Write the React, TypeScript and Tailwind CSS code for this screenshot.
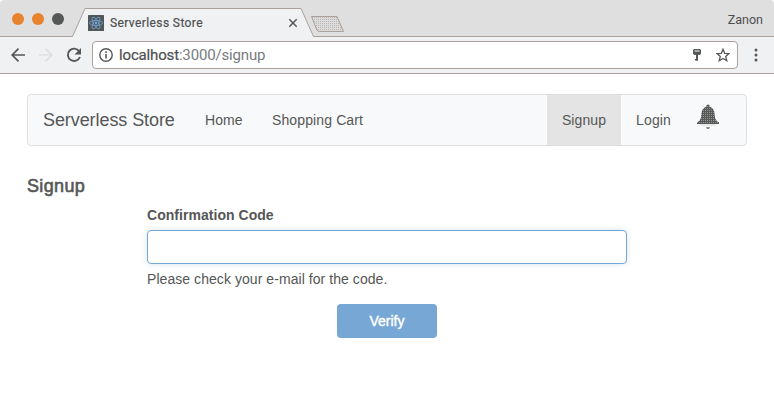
import React from "react";

function BrowserTab() {
  return (
    <div className="relative -ml-px h-[37px] w-[244px] shrink-0">
      <svg className="absolute inset-0" width="244" height="37" viewBox="0 0 244 37">
        <path d="M0 37V36.5H1.5L14 8.5H230L242.500 36.500H244V37Z" fill="#f0f1f3" />
        <path d="M0 36.5H1.500L14 8.500H230L242.500 36.500H244" fill="none" stroke="#aaa19c" />
      </svg>
      <div className="relative flex h-full items-center pt-[8px] pl-[17px]">
        <ReactMark />
        <span className="ml-[6px] w-[93px] font-['Roboto',sans-serif] text-[12px] leading-[16px] tracking-[0.4px] whitespace-nowrap text-[#4d4f50] [-webkit-text-stroke:0.2px_#4d4f50]">
          Serverless Store
        </span>
        <svg className="ml-[85px]" width="10" height="10" viewBox="0 0 10 10">
          <path d="M1.300 1.300 8.700 8.700M8.700 1.300 1.300 8.700" stroke="#555756" strokeWidth="1.500" />
        </svg>
      </div>
    </div>
  );
}

function ReactMark() {
  return (
    <svg width="16" height="16" viewBox="0 0 16 16">
      <rect width="16" height="16" rx="0.500" fill="#53585a" />
      <g fill="none" stroke="#6fa3d2" strokeWidth="0.8">
        <ellipse cx="8" cy="8" rx="6.500" ry="2.500" />
        <ellipse cx="8" cy="8" rx="6.500" ry="2.500" transform="rotate(60 8 8)" />
        <ellipse cx="8" cy="8" rx="6.500" ry="2.500" transform="rotate(120 8 8)" />
      </g>
      <circle cx="8" cy="8" r="1.300" fill="#6fa3d2" />
    </svg>
  );
}

function TabStrip() {
  return (
    <div className="flex h-[37px] rounded-t-[4px] border-b border-[#aaa19c] bg-[#dfdfdf]">
      <div className="flex h-[38px] w-[72px] shrink-0 items-center gap-2 pl-[12px]">
        <span className="size-[12px] rounded-full bg-[#e9822d]" />
        <span className="size-[12px] rounded-full bg-[#e9822d]" />
        <span className="size-[12px] rounded-full bg-[#555857]" />
      </div>
      <BrowserTab />
      <svg className="mt-[15px] -ml-[5px]" width="35" height="18" viewBox="0 0 35 18">
        <defs>
          <pattern id="dots" width="2" height="2" patternUnits="userSpaceOnUse">
            <rect width="2" height="2" fill="#dcdcdc" />
            <rect width="1" height="1" fill="#bbb5b1" />
          </pattern>
        </defs>
        <path d="M1.500 1.500H27L33.500 16.500H9.500Q7.500 16.500 6.500 14Z" fill="url(#dots)" stroke="#aaa19c" />
      </svg>
      <span className="mt-[11px] mr-[11px] ml-auto font-['Roboto',sans-serif] text-[12.500px] leading-[18px] tracking-[0px] text-[#4d4f50]">
        Zanon
      </span>
    </div>
  );
}

function Toolbar() {
  return (
    <div className="flex h-[37px] items-center border-b border-[#aaa19c] bg-[#f0f1f3]">
      <svg className="ml-[10px]" width="16" height="16" viewBox="0 0 16 16" fill="none" stroke="#555857" strokeWidth="1.700">
        <path d="M15 8H2.500M8.500 1.700 2.200 8l6.300 6.300" />
      </svg>
      <svg className="ml-[12px]" width="16" height="16" viewBox="0 0 16 16" fill="none" stroke="#dfdfdf" strokeWidth="1.700">
        <path d="M1 8h12.500M7.500 1.700 13.800 8l-6.300 6.300" />
      </svg>
      <svg className="ml-[12px]" width="16" height="16" viewBox="0 0 16 16" fill="none">
        <path d="M13.200 4.300A6.200 6.200 0 1 0 13.900 10" stroke="#555857" strokeWidth="1.900" />
        <path d="M15 1v6.500H8.500Z" fill="#555857" />
      </svg>
      <div className="ml-[10px] flex h-[28px] w-[646px] items-center rounded-[4px] border border-[#aaa19c] bg-white">
        <svg className="ml-[6px]" width="14" height="14" viewBox="0 0 14 14" fill="none">
          <circle cx="7" cy="7" r="6.200" stroke="#555857" strokeWidth="1.400" />
          <path d="M7 6v4.500M7 3.300v1.600" stroke="#555857" strokeWidth="1.600" />
        </svg>
        <span className="ml-[6px] font-['Roboto',sans-serif] text-[15px] leading-[20px] tracking-[-0.16px] text-[#777b7e]">
          <span className="text-[#4d4f50] [-webkit-text-stroke:0.2px_#4d4f50]">localhost</span>:3000/signup
        </span>
        <svg className="mr-[14px] ml-auto" width="10" height="14" viewBox="0 0 10 14" fill="#555857">
          <path fillRule="evenodd" d="M2 1h6l1 1v4L7.500 7H6v5.500H4V7H2.500L1 6V2ZM2.500 2.500v1h5v-1Z" />
          <path d="M3 11H6v1.500H3Z" />
        </svg>
        <svg className="mr-[7px]" width="14" height="14" viewBox="0 0 14 14" fill="none" stroke="#555857" strokeWidth="1.300">
          <path d="m7 1.300 1.700 4 4.300.3-3.300 2.800 1.100 4.300L7 10.400l-3.800 2.300 1.100-4.300L1 5.600l4.300-.3Z" />
        </svg>
      </div>
      <svg className="ml-[16px]" width="4" height="14" viewBox="0 0 4 14" fill="#555857">
        <circle cx="2" cy="2" r="1.500" />
        <circle cx="2" cy="7" r="1.500" />
        <circle cx="2" cy="12" r="1.500" />
      </svg>
    </div>
  );
}

function Bell() {
  return (
    <svg width="22" height="26" viewBox="0 0 22 26">
      <defs>
        <pattern id="bellDots" width="2" height="2" patternUnits="userSpaceOnUse">
          <rect width="2" height="2" fill="#555857" />
          <rect width="1" height="1" fill="#959492" />
        </pattern>
      </defs>
      <path
        d="M9.500 2V1.500Q9.500 0.500 11 .5T12.500 1.500V2.500Q17 4 17.500 9C17.800 14 18.500 16.500 22 18.500V20H0V18.500C3.500 16.500 4.200 14 4.500 9Q5 4 9.500 2.500Z"
        fill="url(#bellDots)"
      />
      <path d="M3 20.500H19L18 21.500H4Z" fill="#d8d6d5" />
      <path d="M9 23.300H13Q12.500 25 11 25T9 23.300Z" fill="#666766" />
    </svg>
  );
}

function Navbar() {
  return (
    <nav className="flex h-[52px] items-stretch rounded-[4px] border border-[#dfdfdf] bg-[#f8f9fa] text-[14px] leading-[50px] whitespace-nowrap">
      <a className="ml-[15px] w-[132px] text-[18px] tracking-[-0.08px]">Serverless Store</a>
      <a className="ml-[30px] w-[38px] tracking-[0.1px]">Home</a>
      <a className="ml-[29px] tracking-[0.12px]">Shopping Cart</a>
      <a className="ml-auto w-[74px] bg-[#e4e4e4] text-center tracking-[0.1px]">Signup</a>
      <a className="w-[65px] text-center tracking-[0.1px]">Login</a>
      <a className="mt-[9px] mr-[27px] ml-[11px]">
        <Bell />
      </a>
    </nav>
  );
}

function ConfirmationForm() {
  return (
    <form className="mx-auto flex w-[480px] flex-col" onSubmit={(event) => event.preventDefault()}>
      <label htmlFor="code" className="text-[14px] leading-[20px] font-bold tracking-[0.04px]">
        Confirmation Code
      </label>
      <input
        id="code"
        className="mt-[5px] h-[34px] rounded-[4px] border border-[#73a7d5] bg-white px-3 shadow-[0_0_7px_#dbe4ea] outline-none"
      />
      <p className="mt-[5px] text-[14px] leading-[20px] tracking-[0.06px]">Please check your e-mail for the code.</p>
      <button className="mt-[15px] h-[34px] w-[100px] self-center rounded-[4px] bg-[#77a7d5] text-[14px] text-white [-webkit-text-stroke:0.4px_#fff]">
        Verify
      </button>
    </form>
  );
}

export default function App() {
  return (
    <div className="h-[408px] w-[774px] overflow-hidden bg-white">
      <TabStrip />
      <Toolbar />
      <main className="px-[27px] pt-[20px] font-['Liberation_Sans',Arial,sans-serif] text-[#555756]">
        <Navbar />
        <h1 className="mt-[29px] text-[18px] leading-[22px] font-medium tracking-[0.35px] [-webkit-text-stroke:0.6px_#555756]">
          Signup
        </h1>
        <div className="pt-[8px]">
          <ConfirmationForm />
        </div>
      </main>
    </div>
  );
}
